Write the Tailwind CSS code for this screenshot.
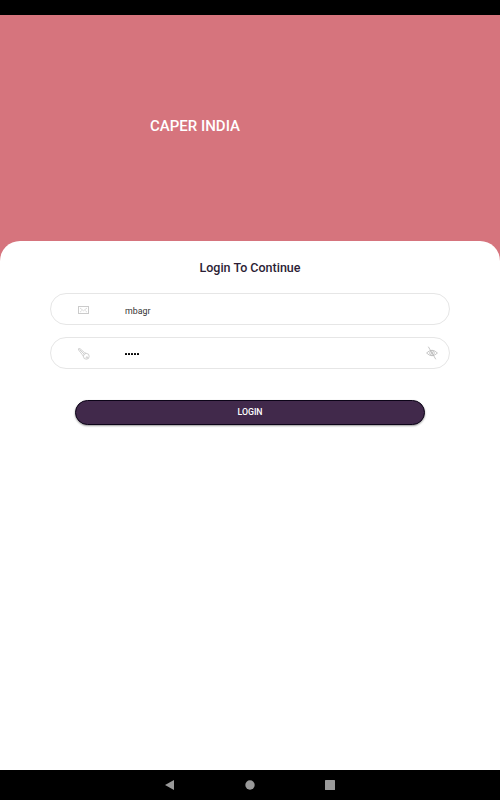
<!DOCTYPE html>
<html lang="en">
<head>
  <meta charset="UTF-8">
  <meta name="viewport" content="width=device-width, initial-scale=1.0">
  <title>Caper India - Login</title>
  <script src="https://cdn.jsdelivr.net/npm/@tailwindcss/browser@4"></script>
</head>
<body class="bg-black font-[Roboto,sans-serif]">

<div class="flex flex-col h-screen overflow-hidden">
  <!-- Status bar -->
  <div class="h-[15px] shrink-0 bg-black"></div>

  <div class="flex flex-col flex-1 bg-[#d6747d]">
    <header class="h-[226px] shrink-0 pt-[101px] pl-[150px]">
      <h1 class="text-[15px] leading-5 font-medium text-white">CAPER INDIA</h1>
    </header>

    <main class="flex-1 bg-white rounded-t-[20px] px-[50px] pt-[17px]">
      <h2 class="text-center text-[12.5px] leading-5 font-medium text-[#2b1d35]">Login To Continue</h2>

      <form id="login-form" class="mt-[15px]">
        <label class="flex items-center h-8 rounded-full border border-[#e6e6e6] pl-[27px] pr-3">
          <svg class="w-3 h-3 mt-0.5 shrink-0" viewBox="0 0 12 12" fill="none" stroke="#cbcbcb" stroke-width="1">
            <rect x="0.5" y="2.5" width="10" height="7"/>
            <path d="M2 4l3.500 2.800L9 4M2 8.200l1.800-1.700M9 8.200l-1.800-1.700" stroke-width="0.7"/>
          </svg>
          <input type="text" name="username" value="mbagr"
                 class="ml-[35px] mt-[3px] flex-1 min-w-0 text-[8.8px] leading-4 text-[#333] outline-none">
        </label>

        <label class="mt-3 flex items-center h-8 rounded-full border border-[#e6e6e6] pl-[27px] pr-[11px]">
          <svg class="w-3 h-3 mt-0.5 shrink-0" viewBox="0 0 12 12" fill="none" stroke="#c4c4c4" stroke-width="0.8">
            <circle cx="8.300" cy="8.300" r="2.900"/>
            <path d="M5.400 8.300L4.200 6.500L0.600 2L0.500 0.700L1.900 0.600L6.600 4.600L8.300 5.400M1.500 1.500L6.300 6.300"/>
            <circle cx="8.900" cy="9.400" r="0.700"/>
          </svg>
          <span class="ml-[35px] mt-0.5 flex-1 flex gap-[1px]">
            <span class="w-0.5 h-0.5 rounded-[0.5px] bg-black"></span>
            <span class="w-0.5 h-0.5 rounded-[0.5px] bg-black"></span>
            <span class="w-0.5 h-0.5 rounded-[0.5px] bg-black"></span>
            <span class="w-0.5 h-0.5 rounded-[0.5px] bg-black"></span>
            <span class="w-0.5 h-0.5 rounded-[0.5px] bg-black"></span>
          </span>
          <svg class="w-3 h-[14px] shrink-0" viewBox="0 0 12 14" fill="none" stroke="#b8b8b8" stroke-width="0.8">
            <path d="M0.600 7Q6 1.500 11.400 7Q6 12.500 0.600 7Z"/>
            <circle cx="6" cy="7" r="2.300"/>
            <circle cx="6" cy="7" r="0.700"/>
            <path d="M2.300 0.700L9.800 13.300"/>
          </svg>
        </label>

        <button type="button"
                class="block mt-[31px] mx-auto w-[350px] h-[25px] rounded-full border border-[#0c0418] bg-[#41294b] text-[8.75px] font-medium text-white shadow-[0_1px_2px_rgba(0,0,0,0.4)]">
          LOGIN
        </button>
      </form>
    </main>
  </div>

  <!-- Navigation bar -->
  <nav class="h-[30px] shrink-0 bg-black flex items-center justify-center gap-[70px]">
    <svg class="w-[10px] h-[10px]" viewBox="0 0 10 10" fill="#999"><path d="M0 5L9 0V10Z"/></svg>
    <svg class="w-[10px] h-[10px]" viewBox="0 0 10 10" fill="#999"><circle cx="5" cy="5" r="4.700"/></svg>
    <svg class="w-[10px] h-[10px]" viewBox="0 0 10 10" fill="#999"><rect width="10" height="10" rx="0.500"/></svg>
  </nav>
</div>

</body>
</html>
